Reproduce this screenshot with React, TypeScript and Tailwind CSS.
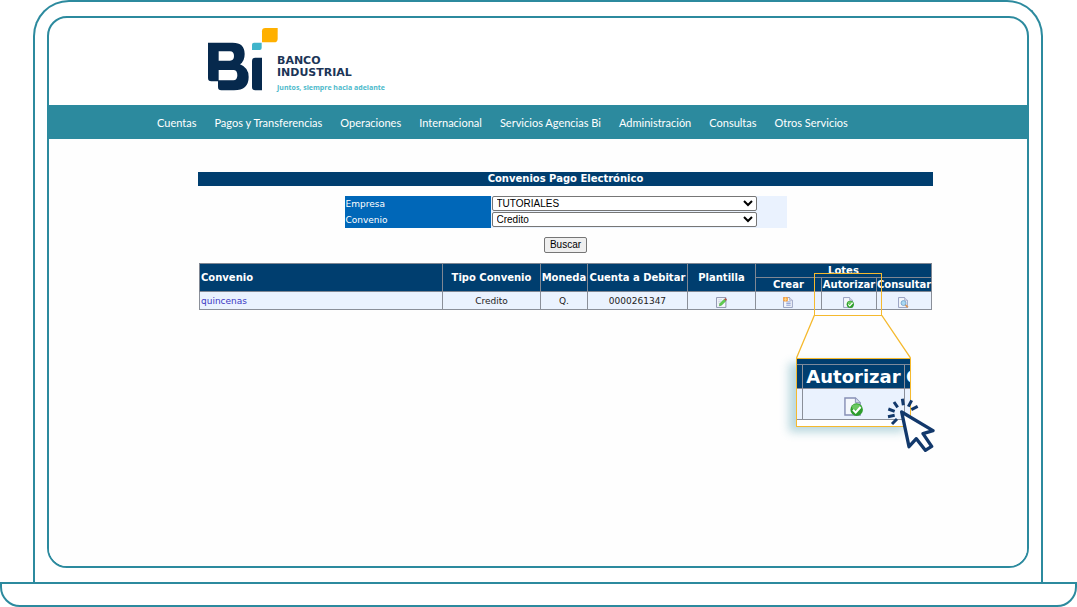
import React, { useState } from 'react';

const menuItems = [
  'Cuentas',
  'Pagos y Transferencias',
  'Operaciones',
  'Internacional',
  'Servicios Agencias Bi',
  'Administración',
  'Consultas',
  'Otros Servicios',
];

const convenios = [
  { nombre: 'quincenas', tipo: 'Credito', moneda: 'Q.', cuenta: '0000261347' },
];

const BiLogo = () => (
  <svg viewBox="54 38 210 189" className="h-[63px] w-[70px] shrink-0" aria-hidden="true">
    <path
      fill="#06294d"
      fillRule="evenodd"
      d="M54 82H128Q164 82 164 116Q164 138 150 147Q176 157 176 185Q176 225 132 225H94Q84 225 84 215V198H64Q54 198 54 188ZM86 108V136H120Q132 136 132 122Q132 108 120 108ZM86 164V195H130Q142 195 142 180Q142 164 130 164Z"
    />
    <path fill="#06294d" d="M196 127H216V225H196Q186 225 186 215V137Q186 127 196 127Z" />
    <path fill="#3fb4cb" d="M192 82H215V98Q215 104 209 104H186V88Q186 82 192 82Z" />
    <path fill="#ffb000" d="M226 38H263V70Q263 81 252 81H216V48Q216 38 226 38Z" />
  </svg>
);

// Sheet of paper shared by all the row icons
const Sheet = ({ children }: { children: React.ReactNode }) => (
  <svg viewBox="0 0 20 20" className="block h-full w-full" aria-hidden="true">
    <path d="M1 1H12L17 6V19H1Z" fill="#f4f7fc" stroke="#8790b5" strokeWidth="1.5" />
    <path d="M12 1V6H17" fill="#d5dbea" stroke="#8790b5" />
    {children}
  </svg>
);

const EditIcon = () => (
  <svg viewBox="0 0 20 20" className="block h-full w-full" aria-hidden="true">
    <path d="M1 1H18V19H1Z" fill="#f4f7fc" stroke="#7c83a0" strokeWidth="1.5" />
    <path d="M4 5H11M4 8H9M4 11H7" stroke="#b5bdd2" />
    <path d="M6 16L7 12L15 4L18 7L10 15Z" fill="#5fd04c" stroke="#3c9a3a" />
    <path d="M15 4L17 2L20 5L18 7Z" fill="#b5483c" />
  </svg>
);

const CreateIcon = () => (
  <Sheet>
    <path d="M6 9H14M6 12H14M6 15H14" stroke="#7d8ecb" strokeWidth="1.5" />
    <rect x="0" y="0" width="9" height="8" rx="2" fill="#f5a24a" />
    <path d="M4.5 1V7M1.5 4H7.5" stroke="#fbe08b" strokeWidth="1.5" />
  </Sheet>
);

const AuthorizeIcon = () => (
  <Sheet>
    <circle cx="13.3" cy="13.3" r="6.6" fill="#2e9e2c" />
    <ellipse cx="13" cy="10.5" rx="4.5" ry="3" fill="#6cc860" />
    <path d="M9.5 13.5L12.3 16.2L17.5 10.5" fill="none" stroke="#fff" strokeWidth="2.2" />
  </Sheet>
);

const SearchIcon = () => (
  <Sheet>
    <path d="M13 14L18 19" stroke="#d9975b" strokeWidth="3" />
    <circle cx="10" cy="11" r="4.5" fill="#a9d8f2" stroke="#6f9dc8" strokeWidth="1.5" />
  </Sheet>
);

const IconButton = ({ label, children }: { label: string; children: React.ReactNode }) => (
  <button type="button" aria-label={label} className="mx-auto mt-1 block h-[11px] w-[11px]">
    {children}
  </button>
);

const ClickCursor = () => (
  <svg
    viewBox="320 414 144 162"
    className="absolute -right-[3px] top-[135px] h-[54px] w-[48px]"
    aria-hidden="true"
  >
    <path
      d="M341 426L352 442M366 416L369 436M394 421L384 440M412 439L393 449M324 447L343 454M323 470L343 466M335 492L350 477"
      stroke="#12386b"
      strokeWidth="9"
      fill="none"
    />
    <path
      d="M364 456L458 512L428 521L454 559L435 571L408 536L386 560Z"
      fill="#fff"
      stroke="#12386b"
      strokeWidth="10"
      strokeLinejoin="round"
    />
  </svg>
);

// Enlarged view of the "Autorizar" column
const Callout = () => (
  <>
    <div className="absolute right-[50px] top-[10px] h-[43px] w-[68px] border border-[#f5b92e]" />
    <svg
      viewBox="0 0 115 43"
      className="absolute right-[21px] top-[52px] h-[43px] w-[115px]"
      aria-hidden="true"
    >
      <path d="M18.5 0L0.5 43M85.5 0L114.5 43" stroke="#f5b92e" strokeWidth="1.3" fill="none" />
    </svg>
    <div className="absolute right-[21px] top-[95px] flex h-[69px] w-[115px] flex-col overflow-hidden border border-[#f5b92e] bg-white shadow-[-7px_5px_9px_#2c8a9e55]">
      <div className="h-[6px] border-b border-[#7d8a9c] bg-[#003e6f]" />
      <div className="flex h-[24px] border-b border-[#8a8f99] bg-[#003e6f] text-[18px] font-bold leading-[23px] text-white">
        <div className="w-[6px] shrink-0 border-r border-[#8a8f99]" />
        <div className="w-[102px] shrink-0 border-r border-[#8a8f99] text-center">Autorizar</div>
        <div className="pl-px">C</div>
      </div>
      <div className="flex h-[31px] border-b border-[#8a8f99] bg-[#eaf2fe]">
        <div className="w-[6px] shrink-0 border-r border-[#8a8f99]" />
        <div className="flex w-[102px] shrink-0 items-center justify-center border-r border-[#8a8f99] pt-1">
          <span className="h-[19px] w-[19px]">
            <AuthorizeIcon />
          </span>
        </div>
      </div>
    </div>
    <ClickCursor />
  </>
);

const App: React.FC = () => {
  const [empresa, setEmpresa] = useState('TUTORIALES');
  const [convenio, setConvenio] = useState('Credito');

  const selectClass =
    'h-[15px] w-[265px] rounded-[2px] border border-[#767676] bg-white font-["Liberation_Sans",Arial,sans-serif] text-[10px] leading-[13px] text-black';
  const thClass = 'border border-[#808793] p-0 font-bold';
  const tdClass = 'border border-[#8a8f99] p-0';

  return (
    <div className='flex min-h-screen flex-col bg-white font-["DejaVu_Sans",Verdana,sans-serif]'>
      <div className="ml-[33px] mr-[34px] flex flex-1 flex-col rounded-t-[36px] border-2 border-b-0 border-[#2c8a9e] px-3 py-[14px]">
        <div className="flex flex-1 flex-col overflow-hidden rounded-[20px] border-2 border-[#2c8a9e]">
          <header className="flex h-[87px] items-start pl-[159px] pt-[10px]">
            <BiLogo />
            <div className="-ml-px flex h-16 flex-col justify-end text-[#1c3557]">
              <p className="text-[11px] font-bold leading-3">
                BANCO
                <br />
                INDUSTRIAL
              </p>
              <p className='mt-1 font-["Open_Sans",sans-serif] text-[7px] font-bold leading-[9px] text-[#4dbacb]'>
                Juntos, siempre hacia adelante
              </p>
            </div>
          </header>

          <nav className="flex h-[34px] items-center gap-[18px] bg-[#2c8a9e] pl-[108px] pt-0.5 font-[Lato,sans-serif] text-[11px] text-white">
            {menuItems.map((item) => (
              <a key={item} href="#" className="whitespace-nowrap">
                {item}
              </a>
            ))}
          </nav>

          <main className="flex-1 bg-[#fefefe] pl-[149px] pr-[94px] pt-[33px]">
            <h1 className="bg-[#003e6f] text-center text-[10px] font-bold leading-[14px] text-white">
              Convenios Pago Electrónico
            </h1>

            <form onSubmit={(e) => e.preventDefault()} className="mt-[10px] flex flex-col items-center">
              <div className="w-[442px] bg-[#eaf2fe] text-[9px] text-white">
                <div className="flex h-4 items-start">
                  <label htmlFor="empresa" className="mr-px h-4 w-[146px] bg-[#0067b8] pl-px leading-4">
                    Empresa
                  </label>
                  <select
                    id="empresa"
                    value={empresa}
                    onChange={(e) => setEmpresa(e.target.value)}
                    className={selectClass}
                  >
                    <option>TUTORIALES</option>
                  </select>
                </div>
                <div className="flex h-4 items-start">
                  <label htmlFor="convenio" className="mr-px h-4 w-[146px] bg-[#0067b8] pl-px leading-4">
                    Convenio
                  </label>
                  <select
                    id="convenio"
                    value={convenio}
                    onChange={(e) => setConvenio(e.target.value)}
                    className={selectClass}
                  >
                    <option>Credito</option>
                  </select>
                </div>
              </div>
              <button
                type="submit"
                className='mt-[9px] h-4 rounded-[2px] border border-[#767676] bg-[#efefef] px-[5px] font-["Liberation_Sans",Arial,sans-serif] text-[10px] leading-[14px] text-black'
              >
                Buscar
              </button>
            </form>

            <div className="relative mx-px mt-[10px]">
              <table className="w-full table-fixed border-collapse text-center">
                <colgroup>
                  <col />
                  <col className="w-[98px]" />
                  <col className="w-[47px]" />
                  <col className="w-[100px]" />
                  <col className="w-[68px]" />
                  <col className="w-[66px]" />
                  <col className="w-[55px]" />
                  <col className="w-[55px]" />
                </colgroup>
                <thead className="whitespace-nowrap bg-[#003e6f] text-[10px] leading-[13px] text-white">
                  <tr>
                    <th rowSpan={2} className={`${thClass} pl-px text-left`}>Convenio</th>
                    <th rowSpan={2} className={thClass}>Tipo Convenio</th>
                    <th rowSpan={2} className={thClass}>Moneda</th>
                    <th rowSpan={2} className={thClass}>Cuenta a Debitar</th>
                    <th rowSpan={2} className={thClass}>Plantilla</th>
                    <th colSpan={3} className={thClass}>Lotes</th>
                  </tr>
                  <tr>
                    <th className={thClass}>Crear</th>
                    <th className={thClass}>Autorizar</th>
                    <th className={thClass}>Consultar</th>
                  </tr>
                </thead>
                <tbody className="bg-[#eaf2fe] text-[9px] leading-4 text-[#222]">
                  {convenios.map((c) => (
                    <tr key={c.nombre} className="h-[18px]">
                      <td className={`${tdClass} pl-px text-left`}>
                        <a href="#" className="text-[#3b38c4]">{c.nombre}</a>
                      </td>
                      <td className={tdClass}>{c.tipo}</td>
                      <td className={tdClass}>{c.moneda}</td>
                      <td className={tdClass}>{c.cuenta}</td>
                      <td className={tdClass}>
                        <IconButton label="Plantilla"><EditIcon /></IconButton>
                      </td>
                      <td className={tdClass}>
                        <IconButton label="Crear"><CreateIcon /></IconButton>
                      </td>
                      <td className={tdClass}>
                        <IconButton label="Autorizar"><AuthorizeIcon /></IconButton>
                      </td>
                      <td className={tdClass}>
                        <IconButton label="Consultar"><SearchIcon /></IconButton>
                      </td>
                    </tr>
                  ))}
                </tbody>
              </table>
              <Callout />
            </div>
          </main>
        </div>
      </div>
      <div className="h-[25px] rounded-b-[20px] border-2 border-[#2c8a9e]" />
    </div>
  );
};

export default App;
